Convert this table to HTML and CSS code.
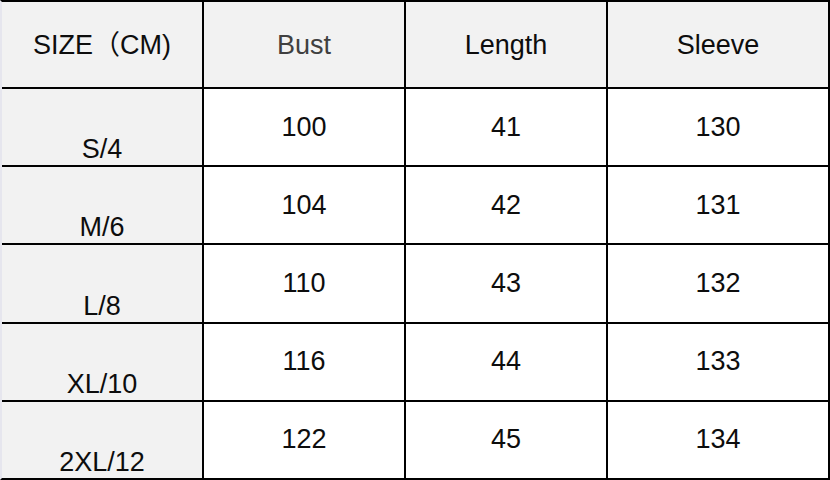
FILE: index.html
```html
<!DOCTYPE html>
<html>
<head>
<meta charset="utf-8">
<link rel="stylesheet" href="styles.css">
</head>
<body>
<div class="chart">
  <div class="cell head">SIZE（CM)</div>
  <div class="cell head muted">Bust</div>
  <div class="cell head">Length</div>
  <div class="cell head">Sleeve</div>

  <div class="cell size">S/4</div>
  <div class="cell">100</div>
  <div class="cell">41</div>
  <div class="cell">130</div>

  <div class="cell size">M/6</div>
  <div class="cell">104</div>
  <div class="cell">42</div>
  <div class="cell">131</div>

  <div class="cell size">L/8</div>
  <div class="cell">110</div>
  <div class="cell">43</div>
  <div class="cell">132</div>

  <div class="cell size">XL/10</div>
  <div class="cell">116</div>
  <div class="cell">44</div>
  <div class="cell">133</div>

  <div class="cell size">2XL/12</div>
  <div class="cell">122</div>
  <div class="cell">45</div>
  <div class="cell">134</div>
</div>
</body>
</html>
```
FILE: styles.css
```css
html, body {
  margin: 0;
  padding: 0;
  background: #ffffff;
}
.chart {
  box-sizing: border-box;
  width: 830px;
  height: 480px;
  display: grid;
  grid-template-columns: 200px 200px 200px 1fr;
  grid-template-rows: 85px repeat(5, 1fr);
  gap: 2px;
  background: #000;
  border-top: 2px solid #000;
  border-right: 2px solid #000;
  border-bottom: 2px solid #000;
  border-left: 2px solid #e6e6ee;
  font-family: "Liberation Sans", Arial, "Noto Sans CJK SC", sans-serif;
  font-size: 27px;
  color: #0d0d0d;
}
.cell {
  background: #fff;
  display: flex;
  align-items: center;
  justify-content: center;
  line-height: 1;
}
.head {
  background: #f2f2f2;
  padding-top: 2px;
}
.muted {
  color: #404040;
}
.size {
  background: #f2f2f2;
  align-items: flex-end;
  padding-bottom: 2px;
}
```
